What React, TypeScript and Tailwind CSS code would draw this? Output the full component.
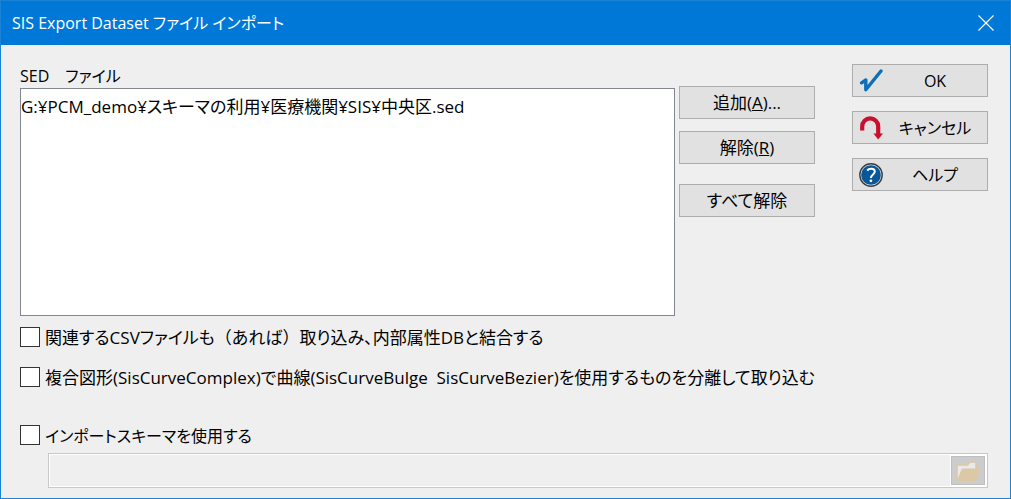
import type { ReactNode } from "react";

const pushButton =
  "flex h-[33px] w-[136px] items-center border border-[#adadad] bg-[#e1e1e1] pt-px hover:border-[#0078d7] hover:bg-[#e5f1fb]";

function ListButton({ children }: { children: ReactNode }) {
  return (
    <button type="button" className={`${pushButton} justify-center`}>
      <span>{children}</span>
    </button>
  );
}

function ActionButton({ icon, label }: { icon: ReactNode; label: string }) {
  return (
    <button type="button" className={`${pushButton} pl-1.5 text-base`}>
      {icon}
      <span className="flex-1 text-center">{label}</span>
    </button>
  );
}

function Option({ id, children }: { id: string; children: ReactNode }) {
  return (
    <div className="flex h-5 items-center gap-[5px]">
      <input
        id={id}
        type="checkbox"
        className="size-5 shrink-0 appearance-none border border-[#333] bg-white checked:bg-[#0078d7]"
      />
      <label htmlFor={id} className="pt-0.5 whitespace-pre">
        {children}
      </label>
    </div>
  );
}

function CheckIcon() {
  return (
    <svg className="size-6 shrink-0" viewBox="0 0 24 24" fill="none" aria-hidden="true">
      <path
        d="M2.6 13.8 L6.8 11 L6.8 20.8 L22 2"
        stroke="#0e6fb8"
        strokeWidth="3.4"
        strokeLinecap="round"
        strokeLinejoin="round"
      />
    </svg>
  );
}

function ReturnIcon() {
  return (
    <svg className="size-6 shrink-0" viewBox="0 0 24 24" fill="none" aria-hidden="true">
      <path d="M3.2 14.6 V10.4 A8 8 0 0 1 19.2 10.4 V18.5" stroke="#c8102e" strokeWidth="4.2" />
      <path d="M14.4 17.6 H24 L19.2 23.4 Z" fill="#c8102e" />
    </svg>
  );
}

function HelpIcon() {
  return (
    <svg className="size-6 shrink-0" viewBox="0 0 24 24" fill="none" aria-hidden="true">
      <circle cx="12" cy="12" r="11.2" fill="#d5dce2" stroke="#3b3f44" strokeWidth="1.4" />
      <circle cx="12" cy="12" r="9.8" fill="#07589b" />
      <path
        d="M8.2 7.6 C9.6 5.4 15.8 4.6 15.8 8.6 C15.8 11.4 11.9 11.6 11.9 15"
        stroke="#fff"
        strokeWidth="2"
      />
      <circle cx="11.9" cy="17.8" r="1.4" fill="#fff" />
    </svg>
  );
}

function FolderIcon() {
  return (
    <svg className="h-[22px] w-6" viewBox="0 0 24 22" fill="none" aria-hidden="true">
      <path
        d="M1 19.5 V6 Q1 5 2 5 H11.5 L14 2 H19 Q20 2 20 3 V9"
        fill="#e9e9e9"
        stroke="#dcc8a4"
        strokeWidth="1.6"
      />
      <path d="M1 20.5 L5.5 9.5 Q6 8.5 7 8.5 H23.5 L21 19.5 Q20.7 21 19.5 21 H2 Z" fill="#dcc8a4" />
    </svg>
  );
}

export default function App() {
  return (
    <div className="flex min-h-screen flex-col border border-[#1883d7] bg-[#efefef] font-['Open_Sans','Noto_Sans_CJK_JP',sans-serif] text-[17px] leading-6 text-black [font-feature-settings:'palt']">
      <header className="flex h-11 items-center justify-between bg-[#0078d7] pr-4 pl-[11px] text-white">
        <h1 className="text-base">SIS Export Dataset ファイル インポート</h1>
        <button type="button" aria-label="閉じる">
          <svg className="size-4" viewBox="0 0 16 16" aria-hidden="true">
            <path d="M0.5 0.5 L15.5 15.5 M15.5 0.5 L0.5 15.5" stroke="#fff" strokeWidth="1.2" />
          </svg>
        </button>
      </header>

      <main className="flex-1 pt-[19px] pr-[22px] pb-[10px] pl-[19px]">
        <div className="flex items-start">
          <div className="flex min-w-0 flex-1 flex-col">
            <label htmlFor="files" className="text-base whitespace-pre">
              SED　ファイル
            </label>
            <select
              id="files"
              size={9}
              className="h-[228px] w-full appearance-none overflow-hidden border border-[#828790] bg-white pt-1"
            >
              <option>G:¥PCM_demo¥スキーマの利用¥医療機関¥SIS¥中央区.sed</option>
            </select>
          </div>

          <div className="ml-1 flex flex-col pt-[22px]">
            <div className="flex flex-col gap-3">
              <ListButton>
                追加(<u>A</u>)...
              </ListButton>
              <ListButton>
                解除(<u>R</u>)
              </ListButton>
            </div>
            <div className="mt-5">
              <ListButton>すべて解除</ListButton>
            </div>
          </div>

          <div className="ml-[37px] flex flex-col gap-[14px]">
            <ActionButton icon={<CheckIcon />} label="OK" />
            <ActionButton icon={<ReturnIcon />} label="キャンセル" />
            <ActionButton icon={<HelpIcon />} label="ヘルプ" />
          </div>
        </div>

        <div className="mt-[11px] flex flex-col gap-5">
          <Option id="csv">
            関連するCSVファイルも
            <span className="[font-feature-settings:normal]">（</span>
            あれば
            <span className="[font-feature-settings:normal]">）</span>
            取り込み、内部属性DBと結合する
          </Option>
          <Option id="split">
            {"複合図形(SisCurveComplex)で曲線(SisCurveBulge  SisCurveBezier)を使用するものを分離して取り込む"}
          </Option>
        </div>

        <div className="mt-[38px]">
          <div className="text-base">
            <Option id="schema">インポートスキーマを使用する</Option>
          </div>
          <div className="mt-2 ml-7 flex h-[35px] items-stretch border border-[#c8c8c8] bg-white p-px">
            <input
              type="text"
              disabled
              aria-label="インポートスキーマ"
              className="min-w-0 flex-1 bg-[#efefef] px-1"
            />
            <button
              type="button"
              disabled
              aria-label="参照"
              className="m-px flex w-[34px] items-center justify-center border border-[#bfbfbf] bg-[#cccccc]"
            >
              <FolderIcon />
            </button>
          </div>
        </div>
      </main>
    </div>
  );
}
